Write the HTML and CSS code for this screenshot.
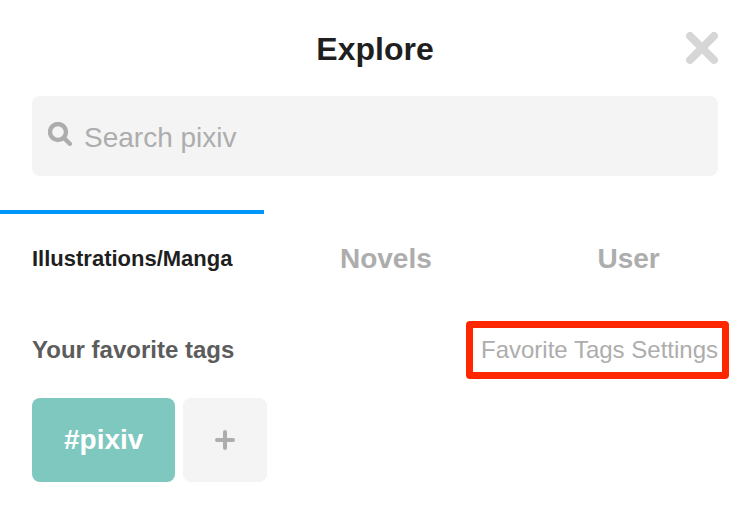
FILE: index.html
```html
<!DOCTYPE html>
<html lang="en">
	<head>
		<meta charset="UTF-8">
		<meta name="viewport" content="width=device-width, initial-scale=1">
		<title>Explore</title>
		<link rel="stylesheet" href="styles.css">
	</head>
	<body>
		<header class="header">
			<h1 class="title">Explore</h1>
			<button type="button" class="close" aria-label="Close">
				<svg width="34" height="34" viewBox="0 0 34 34">
					<path d="M5 5L29 29M29 5L5 29" stroke="#d6d6d6" stroke-width="8" stroke-linecap="round"/>
				</svg>
			</button>
		</header>

		<form class="search">
			<label for="keyword" class="search-icon" aria-label="Search">
				<svg width="24" height="24" viewBox="0 0 24 24" fill="none" stroke="#adadad">
					<circle cx="10" cy="10" r="8" stroke-width="4.4"/>
					<path d="M16 16L21.8 21.8" stroke-width="4.4" stroke-linecap="round"/>
				</svg>
			</label>
			<input type="text" id="keyword" class="search-input" placeholder="Search pixiv">
		</form>

		<nav class="tabs">
			<a href="#" class="tab active">Illustrations/Manga</a>
			<a href="#" class="tab">Novels</a>
			<a href="#" class="tab">User</a>
		</nav>

		<section class="favorite">
			<div class="favorite-head">
				<h2 class="favorite-title">Your favorite tags</h2>
				<a href="#" class="settings">Favorite Tags Settings</a>
			</div>
			<div class="tags">
				<a href="#" class="tag">#pixiv</a>
				<button type="button" class="add" aria-label="Add tag">
					<svg width="20" height="20" viewBox="0 0 20 20">
						<path d="M10 2V18M2 10H18" stroke="#adadad" stroke-width="4" stroke-linecap="round"/>
					</svg>
				</button>
			</div>
		</section>
	</body>
</html>
```

FILE: styles.css
```css
*{
	margin: 0;
	padding: 0;
	box-sizing: border-box;
}
body{
	background: #fff;
	color: #1f1f1f;
	font-family: "Liberation Sans", Arial, sans-serif;
}
a{
	text-decoration: none;
}
button{
	border: none;
	background: none;
	cursor: pointer;
}
svg{
	display: block;
}

/* header */
.header{
	display: grid;
	grid-template-columns: 1fr auto 1fr;
	align-items: center;
	height: 96px;
	padding: 0 31px;
}
.title{
	grid-column: 2;
	padding-top: 2px;
	font-size: 32px;
	line-height: 40px;
}
.close{
	justify-self: end;
}

/* search box */
.search{
	display: flex;
	align-items: center;
	gap: 12px;
	height: 80px;
	margin: 0 32px;
	padding: 0 16px;
	border-radius: 8px;
	background: #f4f4f4;
}
.search-icon{
	padding-bottom: 4px;
}
.search-input{
	flex: 1;
	min-width: 0;
	height: 80px;
	padding-top: 3px;
	border: none;
	outline: none;
	background: none;
	color: #1f1f1f;
	font-family: inherit;
	font-size: 28px;
}
.search-input::placeholder{
	color: #adadad;
}

/* tabs */
.tabs{
	display: flex;
	margin-top: 34px;
}
.tab{
	flex: 1;
	border-top: 4px solid transparent;
	color: #adadad;
	font-size: 28px;
	font-weight: bold;
	line-height: 90px;
	text-align: center;
}
.tab.active{
	flex: none;
	padding: 0 32px;
	border-color: #0096fa;
	color: #1f1f1f;
	font-size: 22px;
}

/* favorite tags */
.favorite{
	padding: 17px 21px 32px 32px;
}
.favorite-head{
	display: flex;
	justify-content: space-between;
	align-items: center;
}
.favorite-title{
	color: #5c5c5c;
	font-size: 24px;
}
.settings{
	padding: 0 4px 0 8px;
	border: 7px solid #ff2600;
	border-radius: 4px;
	color: #adadad;
	font-size: 24px;
	line-height: 44px;
}
.tags{
	display: flex;
	gap: 8px;
	margin-top: 19px;
}
.tag,
.add{
	display: flex;
	justify-content: center;
	align-items: center;
	height: 84px;
	padding: 0 32px;
	border-radius: 8px;
}
.tag{
	background: #7fc8c0;
	color: #fff;
	font-size: 28px;
	font-weight: bold;
}
.add{
	background: #f4f4f4;
}
```
